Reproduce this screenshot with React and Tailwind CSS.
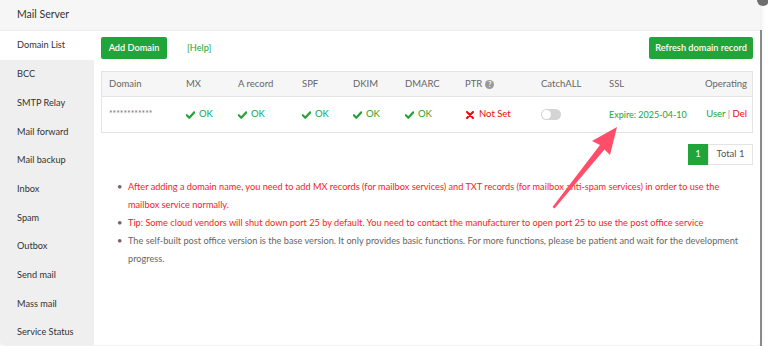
import React from "react";

const menu = [
  "Domain List",
  "BCC",
  "SMTP Relay",
  "Mail forward",
  "Mail backup",
  "Inbox",
  "Spam",
  "Outbox",
  "Send mail",
  "Mass mail",
  "Service Status",
];

const cols = [
  { label: "Domain", w: "w-[77px]" },
  { label: "MX", w: "w-[52px]" },
  { label: "A record", w: "w-[64px]" },
  { label: "SPF", w: "w-[51px]" },
  { label: "DKIM", w: "w-[52px]" },
  { label: "DMARC", w: "w-[60px]" },
  { label: "PTR", w: "w-[76px]" },
  { label: "CatchALL", w: "w-[68px]" },
  { label: "SSL", w: "w-[90px]" },
];

function Check() {
  return (
    <svg width="9" height="8" viewBox="0 0 9 8" className="mr-[4px] shrink-0">
      <path d="M0.8 4.2 L3.3 6.8 L8.3 1.3" fill="none" stroke="#20a53a" strokeWidth="2.2" strokeLinecap="round" strokeLinejoin="round" />
    </svg>
  );
}

function Cross() {
  return (
    <svg width="8" height="8" viewBox="0 0 8 8" className="mr-[5px] shrink-0">
      <path d="M1 1 L7 7 M7 1 L1 7" stroke="#ef0808" strokeWidth="2" strokeLinecap="round" />
    </svg>
  );
}

function Ok() {
  return (
    <span className="flex items-center text-[#20a53a]">
      <Check />
      OK
    </span>
  );
}

export default function App() {
  return (
    <div
      className="relative w-[768px] h-[346px] overflow-hidden bg-white text-[9.5px] text-[#333]"
      style={{ fontFamily: 'Lato, "Noto Sans", sans-serif' }}
    >
      <div className="flex h-full">
        {/* Dialog */}
        <div className="flex flex-col w-[760px] h-[345px] rounded-[4px] overflow-hidden bg-white shadow-[0_0_6px_rgba(0,0,0,0.12)]">
          <div className="h-[31px] shrink-0 flex items-center px-[17px] bg-[#f6f6f6] border-b border-[#ececec] text-[10.5px] text-[#333]">
            Mail Server
          </div>
          <div className="flex flex-1 min-h-0">
            {/* Sidebar */}
            <div className="w-[94px] shrink-0 bg-[#efefef]">
              {menu.map((m, i) => (
                <div
                  key={m}
                  className={
                    "h-[28.7px] flex items-center pl-[17px] text-[9.2px] text-[#333] " +
                    (i === 0 ? "bg-white" : "")
                  }
                >
                  {m}
                </div>
              ))}
            </div>

            {/* Content */}
            <div className="flex-1 min-w-0 pl-[7px] pr-[7px] pt-[6px]">
              <div className="flex items-center h-[22px]">
                <button className="h-[22px] w-[66px] rounded-[2px] bg-[#20a53a] text-white text-[9.2px] font-semibold">
                  Add Domain
                </button>
                <span className="ml-[20px] text-[#20a53a] text-[9.2px]">[Help]</span>
                <button className="ml-auto h-[22px] w-[104px] rounded-[2px] bg-[#20a53a] text-white text-[9.2px] font-semibold">
                  Refresh domain record
                </button>
              </div>

              {/* Table */}
              <div className="mt-[12px] border border-[#e4e4e4]">
                <div className="flex h-[25px] items-center bg-[#f6f6f6] border-b border-[#e4e4e4] text-[#666]">
                  {cols.map((c) => (
                    <div key={c.label} className={c.w + " shrink-0 pl-[7px] flex items-center"}>
                      {c.label}
                      {c.label === "PTR" && (
                        <span className="ml-[3px] w-[9px] h-[9px] rounded-full bg-[#999] text-white text-[7px] font-bold leading-none flex items-center justify-center">
                          ?
                        </span>
                      )}
                    </div>
                  ))}
                  <div className="flex-1 text-right pr-[5px]">Operating</div>
                </div>
                <div className="flex h-[35px] items-center">
                  <div className="w-[77px] shrink-0 pl-[7px] text-[#777] text-[8.5px]">************</div>
                  <div className="w-[52px] shrink-0 pl-[7px]"><Ok /></div>
                  <div className="w-[64px] shrink-0 pl-[7px]"><Ok /></div>
                  <div className="w-[51px] shrink-0 pl-[7px]"><Ok /></div>
                  <div className="w-[52px] shrink-0 pl-[7px]"><Ok /></div>
                  <div className="w-[60px] shrink-0 pl-[7px]"><Ok /></div>
                  <div className="w-[76px] shrink-0 pl-[8px] flex items-center text-[#ef0808]">
                    <Cross />
                    Not Set
                  </div>
                  <div className="w-[68px] shrink-0 pl-[7px]">
                    <div className="w-[20px] h-[11px] rounded-full bg-[#d4d4d4] flex items-center pl-[1px]">
                      <div className="w-[9px] h-[9px] rounded-full bg-white" />
                    </div>
                  </div>
                  <div className="w-[90px] shrink-0 pl-[7px] text-[9px] text-[#20a53a] whitespace-nowrap">Expire: 2025-04-10</div>
                  <div className="flex-1 text-right pr-[5px] whitespace-nowrap">
                    <span className="text-[#20a53a]">User</span>
                    <span className="text-[#999]"> | </span>
                    <span className="text-[#ef0808]">Del</span>
                  </div>
                </div>
              </div>

              {/* Pagination */}
              <div className="flex justify-end mt-[11px]">
                <div className="w-[20px] h-[21px] bg-[#20a53a] text-white flex items-center justify-center">1</div>
                <div className="h-[21px] w-[45px] border border-[#e4e4e4] flex items-center justify-center text-[#555]">Total 1</div>
              </div>

              {/* Tips */}
              <ul className="mt-[13px] pl-[16px] pr-[4px] leading-[18px] text-[9.2px]">
                <li className="flex">
                  <span className="w-[11px] shrink-0 text-[#666]">•</span>
                  <span className="text-[#ff1a1a]">
                    After adding a domain name, you need to add MX records (for mailbox services) and TXT records (for mailbox anti-spam services) in order to use the
                    <br />
                    mailbox service normally.
                  </span>
                </li>
                <li className="flex">
                  <span className="w-[11px] shrink-0 text-[#666]">•</span>
                  <span className="text-[#ff1a1a]">
                    Tip: Some cloud vendors will shut down port 25 by default. You need to contact the manufacturer to open port 25 to use the post office service
                  </span>
                </li>
                <li className="flex">
                  <span className="w-[11px] shrink-0 text-[#666]">•</span>
                  <span className="text-[#666]">
                    The self-built post office version is the base version. It only provides basic functions. For more functions, please be patient and wait for the development
                    <br />
                    progress.
                  </span>
                </li>
              </ul>
            </div>
          </div>
        </div>
        <div className="w-[2px] mt-[30px] bg-[#8a8a8a]" />
      </div>

      {/* Close button corner */}
      <div className="absolute left-[757px] top-[-6px] w-[12px] h-[12px] rounded-full bg-[#6f6f6f]" />

      {/* Annotation arrow */}
      <svg className="absolute left-0 top-0 pointer-events-none" width="768" height="346">
        <polygon
          points="617,127 610,155 604.5,149.5 554.5,208.5 552.5,207 600,145 592,141"
          fill="#ff4d6a"
        />
      </svg>
    </div>
  );
}
